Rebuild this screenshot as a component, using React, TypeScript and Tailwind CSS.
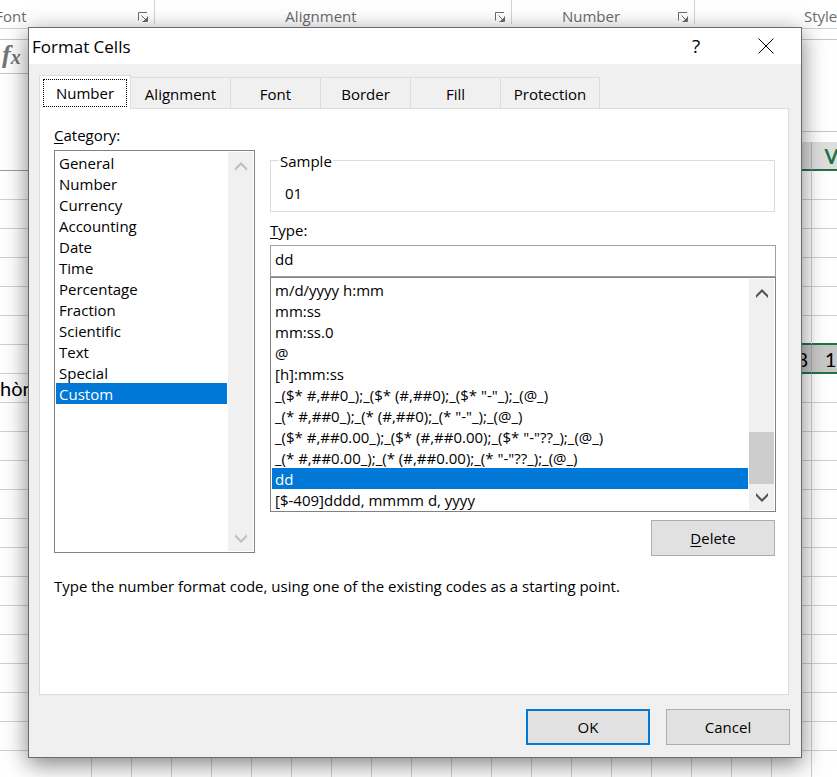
import { useState, type ReactNode } from "react";

const CATEGORIES = [
  "General",
  "Number",
  "Currency",
  "Accounting",
  "Date",
  "Time",
  "Percentage",
  "Fraction",
  "Scientific",
  "Text",
  "Special",
  "Custom",
];

const FORMATS = [
  "m/d/yyyy h:mm",
  "mm:ss",
  "mm:ss.0",
  "@",
  "[h]:mm:ss",
  '_($* #,##0_);_($* (#,##0);_($* "-"_);_(@_)',
  '_(* #,##0_);_(* (#,##0);_(* "-"_);_(@_)',
  '_($* #,##0.00_);_($* (#,##0.00);_($* "-"??_);_(@_)',
  '_(* #,##0.00_);_(* (#,##0.00);_(* "-"??_);_(@_)',
  "dd",
  "[$-409]dddd, mmmm d, yyyy",
];

const TABS = [
  { name: "Number", width: "w-[92px]" },
  { name: "Alignment", width: "w-[100px]" },
  { name: "Font", width: "w-[90px]" },
  { name: "Border", width: "w-[90px]" },
  { name: "Fill", width: "w-[90px]" },
  { name: "Protection", width: "w-[99px]" },
];

const COLUMNS = Array.from({ length: 20 }, (_, i) => i);
const ROWS = Array.from({ length: 21 }, (_, i) => i);

function Launcher() {
  return (
    <svg width="11" height="11" viewBox="0 0 11 11" fill="none" stroke="#6b6b6b" aria-hidden="true">
      <path d="M0.5 8.5V0.5H9" />
      <path d="M3.5 3.5L8 8" />
      <path d="M9.5 4.5V9.5H4.5" />
      <path d="M9 6V9H6Z" fill="#6b6b6b" />
    </svg>
  );
}

function RibbonGroup({ label, className }: { label: string; className: string }) {
  return (
    <div className={`flex h-6 shrink-0 items-end border-r border-[#d4d4d4] pr-[5px] ${className}`}>
      <span className="flex-1 pr-2 text-center text-[15px] leading-4">{label}</span>
      <button type="button" aria-label={`${label} settings`} className="pb-px">
        <Launcher />
      </button>
    </div>
  );
}

function Worksheet() {
  return (
    <div className="flex h-full flex-col overflow-hidden bg-white">
      <div className="flex h-[29px] shrink-0 items-start overflow-hidden border-b border-[#d0d0d0] text-[#6b6b6b]">
        <RibbonGroup label="Font" className="-ml-[108px] w-[263px]" />
        <RibbonGroup label="Alignment" className="w-[357px]" />
        <RibbonGroup label="Number" className="w-[183px]" />
        <div className="flex h-6 items-end pl-[109px] text-[15px] leading-4">Styles</div>
      </div>
      <div className="flex h-[113px] shrink-0 items-start pt-[10px]">
        <div className="flex h-[35px] w-24 items-center border-y border-[#c6c6c6] pb-1 pl-[2px] font-['Liberation_Serif',serif] font-bold text-[#757575] italic">
          <span className="text-[26px] leading-6">f</span>
          <span className="pt-1 text-[20px] leading-4">x</span>
        </div>
        <div className="h-[93px] flex-1 border-y border-[#c6c6c6]" />
      </div>
      <table className="w-[852px] shrink-0 table-fixed border-separate border-spacing-0 font-['Lato',sans-serif] text-[20px]">
        <colgroup>
          {COLUMNS.map((c) => (
            <col key={c} className={c === 0 ? "w-[92px]" : "w-10"} />
          ))}
        </colgroup>
        <thead>
          <tr className="h-[29px]">
            {COLUMNS.map((c) => (
              <th
                key={c}
                className={
                  c < 18
                    ? "border-b border-[#9b9b9b] p-0 leading-6"
                    : "border-r border-b-2 border-r-[#b5b5b5] border-b-[#217346] bg-[#dedede] p-0 leading-6 font-bold text-[#217346]"
                }
              >
                {c === 19 ? "V" : ""}
              </th>
            ))}
          </tr>
        </thead>
        <tbody>
          {ROWS.map((r) => (
            <tr key={r} className="h-[29px]">
              {COLUMNS.map((c) => {
                const selected = r === 6 && c > 0;
                const above = r === 5 && c > 0;
                return (
                  <td
                    key={c}
                    className={
                      selected
                        ? "border-r border-b-2 border-r-[#a8a8a8] border-b-[#217346] bg-[#c8c8c8] p-0 pr-[3px] text-right leading-6"
                        : above
                          ? "border-r border-b-2 border-r-[#cfcfcf] border-b-[#217346] p-0"
                          : "overflow-hidden border-r border-b border-[#cfcfcf] p-0 text-left leading-6 whitespace-nowrap"
                    }
                  >
                    {selected && c === 18 ? "18" : ""}
                    {selected && c === 19 ? "19" : ""}
                    {r === 7 && c === 0 ? "hòng" : ""}
                  </td>
                );
              })}
            </tr>
          ))}
        </tbody>
      </table>
    </div>
  );
}

function Chevron({ down = false, color }: { down?: boolean; color: string }) {
  return (
    <svg width="12" height="9" viewBox="0 0 12 9" fill={color} aria-hidden="true">
      <path d={down ? "M0 0V3L6 9L12 3V0L6 6Z" : "M0 9V6L6 0L12 6V9L6 3Z"} />
    </svg>
  );
}

function ListBox({
  id,
  label,
  items,
  value,
  onChange,
  className,
  arrow,
  children,
}: {
  id: string;
  label: string;
  items: string[];
  value: string;
  onChange: (v: string) => void;
  className: string;
  arrow: string;
  children?: ReactNode;
}) {
  return (
    <div className={`flex border border-[#828282] bg-white p-px ${className}`}>
      <select
        id={id}
        aria-label={label}
        size={items.length}
        value={value}
        onChange={(e) => onChange(e.target.value)}
        className="min-w-0 flex-1 appearance-none overflow-hidden rounded-none border-0 bg-white p-0 text-black outline-none [scrollbar-width:none]"
      >
        {items.map((item) => (
          <option
            key={item}
            value={item}
            className="h-[21px] min-h-0 p-0 pt-px pl-[3px] leading-[21px] whitespace-pre text-black checked:bg-[#0078d7] checked:bg-[linear-gradient(#0078d7,#0078d7)] checked:text-white"
          >
            {item}
          </option>
        ))}
      </select>
      <div className="ml-px flex w-[25px] flex-col items-center justify-between bg-[#f0f0f0]">
        <button type="button" aria-label="Scroll up" className="flex h-[29px] w-full items-center justify-center">
          <Chevron color={arrow} />
        </button>
        {children}
        <button type="button" aria-label="Scroll down" className="flex h-[26px] w-full items-center justify-center">
          <Chevron down color={arrow} />
        </button>
      </div>
    </div>
  );
}

function FormatCells() {
  const [tab, setTab] = useState("Number");
  const [category, setCategory] = useState("Custom");
  const [format, setFormat] = useState("dd");
  const button = "h-9 w-[124px] border-[#adadad] bg-[#e1e1e1]";

  return (
    <div
      role="dialog"
      aria-label="Format Cells"
      className="absolute top-[27px] right-[35px] left-7 border border-[#6b6b6b] bg-[#f0f0f0] shadow-[0_6px_22px_rgba(0,0,0,0.5)]"
    >
      <div className="flex h-9 items-center bg-white pl-[3px]">
        <h1 className="flex-1 pt-px text-[17px] leading-6">Format Cells</h1>
        <button type="button" aria-label="Help" className="w-[70px] text-[19px] leading-6">
          ?
        </button>
        <button type="button" aria-label="Close" className="flex w-[70px] justify-center">
          <svg width="16" height="16" viewBox="0 0 16 16" stroke="#000" strokeWidth="1" aria-hidden="true">
            <path d="M0.5 0.5L15.5 15.5M15.5 0.5L0.5 15.5" />
          </svg>
        </button>
      </div>

      <div className="px-[10px] pt-[11px] pb-3">
        <div role="tablist" className="flex items-end">
          {TABS.map((t) =>
            t.name === tab ? (
              <button
                key={t.name}
                type="button"
                role="tab"
                aria-selected="true"
                className={`z-10 -mb-px h-[34px] border border-b-0 border-[#dcdcdc] bg-white p-[3px] pb-[2px] ${t.width}`}
              >
                <span className="flex h-full items-center justify-center border border-dotted border-black">{t.name}</span>
              </button>
            ) : (
              <button
                key={t.name}
                type="button"
                role="tab"
                aria-selected="false"
                onClick={() => setTab(t.name)}
                className={`h-[31px] border-t border-r border-[#dcdcdc] pt-[3px] ${t.width}`}
              >
                {t.name}
              </button>
            ),
          )}
        </div>

        <div className="mr-[2px] border border-[#dcdcdc] bg-white pt-4 pr-3 pb-[98px] pl-[14px]">
          <div className="flex items-start gap-[15px]">
            <div className="w-[201px] shrink-0">
              <label htmlFor="category" className="block leading-5">
                <u className="underline-offset-2">C</u>ategory:
              </label>
              <ListBox
                id="category"
                label="Category"
                items={CATEGORIES}
                value={category}
                onChange={setCategory}
                className="mt-[5px] h-[403px]"
                arrow="#bfbfbf"
              />
            </div>

            <div className="min-w-0 flex-1 pt-6">
              <fieldset className="mr-px border border-[#dcdcdc] px-[14px]">
                <legend className="-ml-[6px] px-px pt-[2px] leading-5">Sample</legend>
                <output className="block pt-3 pb-2 leading-5">01</output>
              </fieldset>
              <label htmlFor="type" className="mt-2 block leading-5">
                <u className="underline-offset-2">T</u>ype:
              </label>
              <input
                id="type"
                value={format}
                onChange={(e) => setFormat(e.target.value)}
                className="mt-[5px] block h-8 w-full border border-[#a0a0a0] bg-white pb-[5px] pl-1 outline-none"
              />
              <ListBox
                id="formats"
                label="Format codes"
                items={FORMATS}
                value={format}
                onChange={setFormat}
                className="h-[235px]"
                arrow="#555555"
              >
                <div className="mt-auto h-[52px] w-full bg-[#cdcdcd]" />
              </ListBox>
              <div className="mt-2 flex justify-end pr-px">
                <button type="button" className={`border ${button}`}>
                  <u className="underline-offset-2">D</u>elete
                </button>
              </div>
            </div>
          </div>
          <p className="mt-5 leading-5">
            Type the number format code, using one of the existing codes as a starting point.
          </p>
        </div>

        <div className="mt-[14px] flex justify-end gap-4 pr-px">
          <button type="button" className="h-9 w-[124px] border-2 border-[#0078d7] bg-[#e1e1e1]">
            OK
          </button>
          <button type="button" className={`border ${button}`}>
            Cancel
          </button>
        </div>
      </div>
    </div>
  );
}

export default function App() {
  return (
    <main className="relative h-screen overflow-hidden font-['Open_Sans',sans-serif] text-[15px] text-black">
      <Worksheet />
      <FormatCells />
    </main>
  );
}
